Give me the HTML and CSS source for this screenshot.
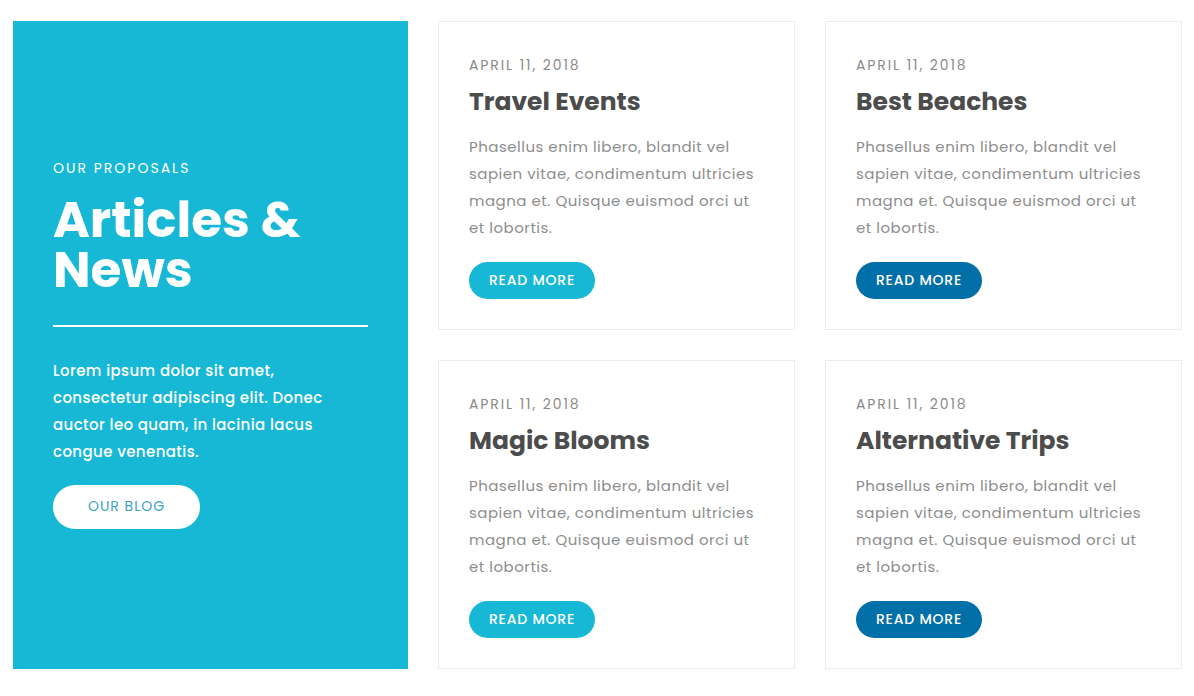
FILE: index.html
```html
<!DOCTYPE html>
<html lang="en">
<head>
<meta charset="utf-8">
<title>Articles &amp; News</title>
<link rel="stylesheet" href="styles.css">
</head>
<body>
<div class="page">
  <section class="intro">
    <div class="intro-inner">
      <p class="eyebrow">OUR PROPOSALS</p>
      <h1 class="intro-title"><span class="title-line">Articles &amp;</span><span class="title-line">News</span></h1>
      <hr class="divider">
      <p class="intro-text">Lorem ipsum dolor sit amet, consectetur adipiscing elit. Donec auctor leo quam, in lacinia lacus congue venenatis.</p>
      <a class="btn-blog" href="#">OUR BLOG</a>
    </div>
  </section>
  <section class="cards">
    <article class="card">
      <p class="date">APRIL 11, 2018</p>
      <h2 class="card-title">Travel Events</h2>
      <p class="card-text">Phasellus enim libero, blandit vel sapien vitae, condimentum ultricies magna et. Quisque euismod orci ut et lobortis.</p>
      <a class="btn btn-light" href="#">READ MORE</a>
    </article>
    <article class="card">
      <p class="date">APRIL 11, 2018</p>
      <h2 class="card-title">Best Beaches</h2>
      <p class="card-text">Phasellus enim libero, blandit vel sapien vitae, condimentum ultricies magna et. Quisque euismod orci ut et lobortis.</p>
      <a class="btn btn-dark" href="#">READ MORE</a>
    </article>
    <article class="card">
      <p class="date">APRIL 11, 2018</p>
      <h2 class="card-title">Magic Blooms</h2>
      <p class="card-text">Phasellus enim libero, blandit vel sapien vitae, condimentum ultricies magna et. Quisque euismod orci ut et lobortis.</p>
      <a class="btn btn-light" href="#">READ MORE</a>
    </article>
    <article class="card">
      <p class="date">APRIL 11, 2018</p>
      <h2 class="card-title">Alternative Trips</h2>
      <p class="card-text">Phasellus enim libero, blandit vel sapien vitae, condimentum ultricies magna et. Quisque euismod orci ut et lobortis.</p>
      <a class="btn btn-dark" href="#">READ MORE</a>
    </article>
  </section>
</div>
</body>
</html>
```
FILE: styles.css
```css
* { box-sizing: border-box; }
html, body { margin: 0; padding: 0; background: #fff; }
body {
  font-family: "Poppins", "Open Sans", "Noto Sans", sans-serif;
  color: #888;
}
p, h1, h2 { margin: 0; }
a { text-decoration: none; }

.page {
  display: grid;
  grid-template-columns: 395px 744px;
  gap: 30px;
  padding: 21px 12px 27px 13px;
}

.intro {
  background: #16b8d6;
  display: flex;
  align-items: center;
  padding: 0 40px;
  height: 648px;
}
.intro-inner { width: 100%; padding-bottom: 4px; }
.eyebrow {
  color: #fff;
  font-size: 14px;
  line-height: 20px;
  letter-spacing: 2px;
  font-weight: 400;
}
.intro-title {
  color: #fff;
  font-size: 50px;
  line-height: 50px;
  font-weight: 700;
  letter-spacing: 0;
  margin-top: 17px;
}
.title-line { display: block; }
.divider {
  border: 0;
  height: 2px;
  background: #fff;
  margin: 30px 0 0;
}
.intro-text {
  color: #fff;
  font-size: 15px;
  line-height: 27px;
  font-weight: 500;
  letter-spacing: 0.4px;
  margin-top: 30px;
}
.btn-blog {
  display: inline-flex;
  align-items: center;
  justify-content: center;
  width: 147px;
  height: 44px;
  margin-top: 20px;
  border-radius: 22px;
  background: #fff;
  color: #3ba2c2;
  font-size: 14px;
  letter-spacing: 1px;
}

.cards {
  display: grid;
  grid-template-columns: 357px 357px;
  grid-auto-rows: 309px;
  gap: 30px;
}
.card {
  border: 1px solid #ececec;
  padding: 31px 30px 29px;
}
.date {
  font-size: 14px;
  line-height: 24px;
  letter-spacing: 1.9px;
  color: #8a8a8a;
}
.card-title {
  font-size: 25px;
  line-height: 36px;
  font-weight: 700;
  color: #4c4c4c;
  margin-top: 7px;
  letter-spacing: 0;
}
.card-text {
  font-size: 15px;
  line-height: 27px;
  letter-spacing: 0.5px;
  color: #8d8d8d;
  margin-top: 13px;
}
.btn {
  display: inline-flex;
  align-items: center;
  justify-content: center;
  width: 126px;
  height: 37px;
  margin-top: 21px;
  border-radius: 19px;
  color: #fff;
  font-size: 14px;
  font-weight: 500;
  letter-spacing: 0.8px;
}
.btn-light { background: #16b8d6; }
.btn-dark { background: #0270a8; }
```
